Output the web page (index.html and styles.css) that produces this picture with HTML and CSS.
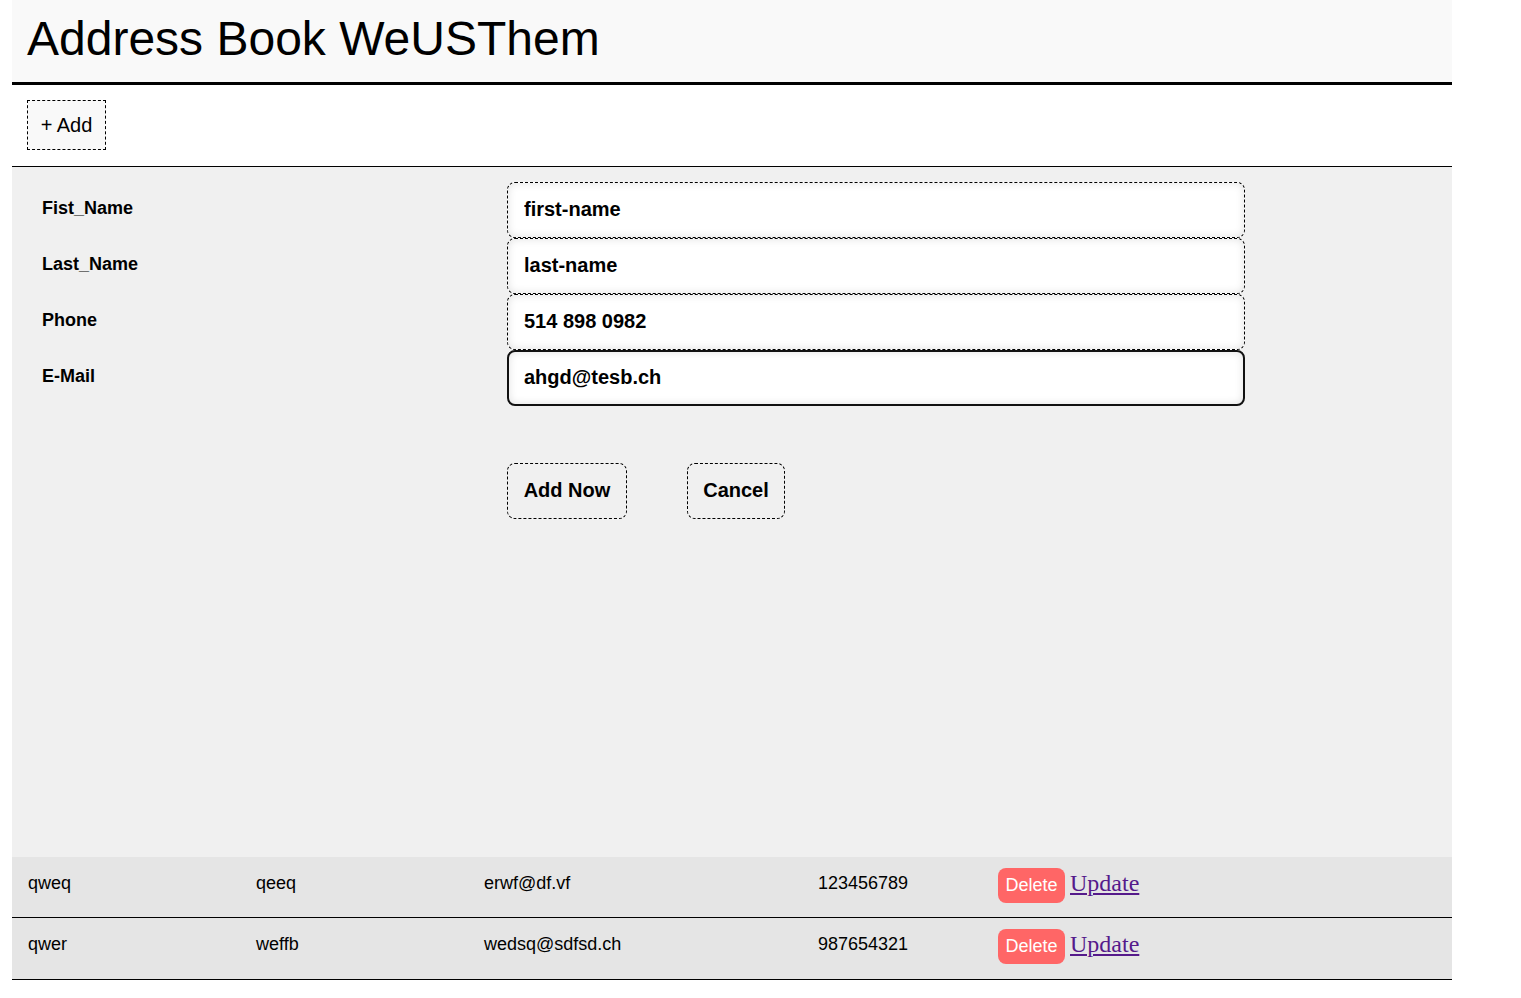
FILE: index.html
```html
<!DOCTYPE html>
<html lang="en">
<head>
<meta charset="utf-8">
<title>Address Book WeUSThem</title>
<link rel="stylesheet" href="styles.css">
</head>
<body>
<div class="app">
  <header class="header">
    <h1 class="title">Address Book WeUSThem</h1>
  </header>
  <div class="toolbar">
    <button class="add-btn">+ Add</button>
  </div>
  <section class="form-area">
    <form class="form">
      <label class="label">Fist_Name</label>
      <input class="field" type="text" value="first-name">
      <label class="label">Last_Name</label>
      <input class="field" type="text" value="last-name">
      <label class="label">Phone</label>
      <input class="field" type="text" value="514 898 0982">
      <label class="label">E-Mail</label>
      <input class="field focused" type="text" value="ahgd@tesb.ch">
      <div class="actions">
        <button type="button" class="form-btn btn-add">Add Now</button>
        <button type="button" class="form-btn btn-cancel">Cancel</button>
      </div>
    </form>
  </section>
  <div class="table">
    <div class="row">
      <div class="cell c1">qweq</div>
      <div class="cell c2">qeeq</div>
      <div class="cell c3">erwf@df.vf</div>
      <div class="cell c4">123456789</div>
      <div class="cell c5"><button class="del">Delete</button><a class="upd" href="#">Update</a></div>
    </div>
    <div class="row">
      <div class="cell c1">qwer</div>
      <div class="cell c2">weffb</div>
      <div class="cell c3">wedsq@sdfsd.ch</div>
      <div class="cell c4">987654321</div>
      <div class="cell c5"><button class="del">Delete</button><a class="upd" href="#">Update</a></div>
    </div>
  </div>
</div>
</body>
</html>
```

FILE: styles.css
```css
html, body {
  margin: 0;
  padding: 0;
  background: #ffffff;
}
body {
  font-family: "Liberation Sans", Arial, sans-serif;
  color: #000;
}
.app {
  width: 1440px;
  margin: 0 12px;
}
.header {
  background: #f9f9f9;
  height: 82px;
  border-bottom: 3px solid #000;
  display: flex;
  align-items: center;
  padding-left: 15px;
}
.title {
  margin: 0;
  font-size: 48px;
  font-weight: 400;
  line-height: 1;
  position: relative;
  top: -2px;
}
.toolbar {
  height: 82px;
  border-bottom: 1px solid #000;
  padding: 15px 15px 0;
  box-sizing: border-box;
}
.add-btn {
  height: 50px;
  width: 79px;
  border: 1px dashed #000;
  background: #f9f9f9;
  font-family: "Liberation Sans", Arial, sans-serif;
  font-size: 20px;
  color: #000;
  padding: 0;
}
.form-area {
  background: #f0f0f0;
  height: 690px;
  padding: 15px 0 0 30px;
  box-sizing: border-box;
}
.form {
  display: grid;
  grid-template-columns: 465px 738px;
  grid-auto-rows: 56px;
}
.label {
  font-weight: 700;
  font-size: 18px;
  padding-top: 16px;
}
.field {
  box-sizing: border-box;
  width: 738px;
  height: 56px;
  border: 1px dashed #000;
  border-radius: 8px;
  background: #fff;
  box-shadow: inset 0 0 8px rgba(0,0,0,0.12);
  font-family: "Liberation Sans", Arial, sans-serif;
  font-weight: 700;
  font-size: 20px;
  padding: 0 0 2px 16px;
  margin: 0;
  color: #000;
  outline: none;
}
.field.focused {
  border: 2px solid #111;
  padding-left: 15px;
}
.actions {
  grid-column: 2;
  display: flex;
  gap: 60px;
  margin-top: 57px;
}
.form-btn {
  height: 56px;
  border: 1px dashed #000;
  border-radius: 8px;
  background: #f0f0f0;
  font-family: "Liberation Sans", Arial, sans-serif;
  font-weight: 700;
  font-size: 20px;
  padding: 0 0 2px;
  color: #000;
}
.btn-add { width: 120px; }
.btn-cancel { width: 98px; }
.table {
  background: #e5e5e5;
}
.row {
  display: flex;
  height: 61px;
  border-bottom: 1px solid #000;
  box-sizing: border-box;
}
.row + .row {
  height: 62px;
}
.cell {
  font-size: 18px;
  padding: 16px 0 0 16px;
  box-sizing: border-box;
  line-height: 21px;
}
.c1 { width: 228px; }
.c2 { width: 228px; }
.c3 { width: 334px; }
.c4 { width: 180px; }
.c5 {
  flex: 1;
  padding-top: 11px;
  display: flex;
  align-items: flex-start;
}
.del {
  height: 35px;
  width: 67px;
  border: none;
  border-radius: 8px;
  background: #ff6666;
  color: #fff;
  font-family: "Liberation Sans", Arial, sans-serif;
  font-size: 18px;
  padding: 0;
  margin-right: 5px;
}
.upd {
  font-family: "Liberation Serif", "Times New Roman", serif;
  font-size: 24px;
  color: #551a8b;
  line-height: 25px;
  margin-top: 3px;
}
```
